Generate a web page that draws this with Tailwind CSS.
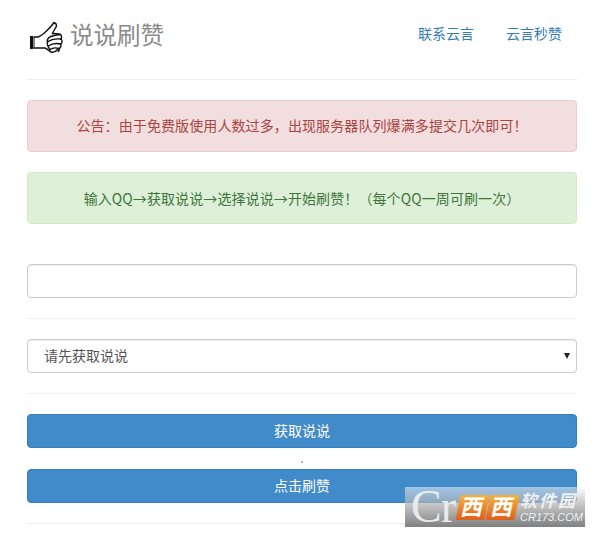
<!DOCTYPE html>
<html lang="zh-CN">
<head>
  <meta charset="UTF-8">
  <meta name="viewport" content="width=device-width, initial-scale=1.0">
  <title>说说刷赞</title>
  <script src="https://cdn.jsdelivr.net/npm/@tailwindcss/browser@4"></script>
</head>
<body class="bg-white font-['Liberation_Sans','Noto_Sans_CJK_SC',sans-serif] text-sm text-[#555]">
  <div class="relative h-[537px] w-[605px] overflow-hidden pl-[27px] pr-[28px]">
    <!-- Header -->
    <div class="flex h-[80px] items-center justify-between border-b border-[#eee]">
      <div class="-ml-[2px] flex items-center gap-[3px] pb-[8px]">
        <svg class="mt-[3px] h-[38px] w-[42px]" viewBox="0 0 42 38" fill="none" stroke="#111" stroke-width="1.4" stroke-linejoin="round" stroke-linecap="round">
          <rect x="5" y="18" width="3" height="13" fill="#111" stroke="none"/>
          <path d="M9 19 L13 19 C16 18 19 15.500 22 12.500 C25 9.500 27 7.500 29 4.500 C30.500 5 31.500 6.500 31.500 8 C30.500 10.500 28.500 13 27.500 15.500"/>
          <path d="M9 30 L20 30 C22 30.500 24 33 26 34 C28 34.500 31 33.500 33 31"/>
          <path d="M9 19.500 L9 30" stroke-width="1"/>
          <path d="M27.500 15.500 C30 15.500 33 15.500 35.500 16.500 C37 18 37 20 35.500 21"/>
          <path d="M24 19.500 C27 17.500 31 17 35.500 16.500"/>
          <path d="M22.500 24 C26 21.500 31 20.500 36 21 C37.500 22.500 37.500 25 35.500 26"/>
          <path d="M23 28 C27 25.500 31 25 35.500 26 C36.500 27.500 36 29.500 34 30.500"/>
          <path d="M25 31.500 C28 29.500 31 29.500 34 30.500 C34.500 32 34 33 33 33.500"/>
          <path d="M24 19.500 C22.500 21 22 23 22.500 24 C22 25.500 22 27 23 28 C23.500 29.500 24 30.500 25 31.500"/>
        </svg>
        <span class="text-[23.500px] leading-[34px] text-[#8a8a8a]">说说刷赞</span>
      </div>
      <nav class="flex gap-[32px] pr-[15px] pb-[12px] text-[#337ab7]">
        <a href="#">联系云言</a>
        <a href="#">云言秒赞</a>
      </nav>
    </div>

    <!-- Alerts -->
    <div class="mt-[20px] flex h-[52px] items-center justify-center rounded-[4px] border border-[#ebccd1] bg-[#f2dede] tracking-[0.1px] text-[#a94442]">公告：由于免费版使用人数过多，出现服务器队列爆满多提交几次即可！</div>
    <div class="mt-[20px] flex h-[52px] items-center justify-center rounded-[4px] border border-[#d6e9c6] bg-[#dff0d8] font-['Noto_Sans_CJK_SC',sans-serif] tracking-[0.1px] text-[#3c763d]">输入QQ→获取说说→选择说说→开始刷赞！（每个QQ一周可刷一次）</div>

    <!-- Form -->
    <input type="text" class="mt-[40px] block h-[34px] w-full rounded-[4px] border border-[#ccc] bg-white px-3 shadow-[inset_0_1px_1px_rgba(0,0,0,0.075)]">
    <div class="mt-[20px] border-t border-[#eee]"></div>
    <div class="relative mt-[20px] flex h-[34px] items-center rounded-[4px] border border-[#ccc] pl-[16px] shadow-[inset_0_1px_1px_rgba(0,0,0,0.075)]">
      请先获取说说
      <span class="absolute right-[6px] top-[13px] h-0 w-0 border-x-[3.500px] border-t-[6px] border-x-transparent border-t-[#222]"></span>
    </div>
    <div class="mt-[20px] border-t border-[#eee]"></div>
    <button class="mt-[20px] block h-[34px] w-full rounded-[4px] border border-[#357ebd] bg-[#428bca] text-white">获取说说</button>
    <span class="absolute left-[301px] top-[461px] h-[2px] w-[2px] rounded-full bg-[#9aa7b5]"></span>
    <button class="mt-[21px] block h-[34px] w-full rounded-[4px] border border-[#357ebd] bg-[#428bca] text-white">点击刷赞</button>
    <div class="mt-[20px] border-t border-[#eee]"></div>

    <!-- Watermark -->
    <div class="absolute left-[405px] top-[487px] flex h-[40px] w-[180px] items-center bg-gradient-to-b from-white/50 to-[#808080] pl-[6px]">
      <span class="w-[47px] font-['Liberation_Serif',serif] text-[46px] leading-[40px] tracking-[-1px] text-[#e8ebee]">Cr</span>
      <div class="flex gap-[1px]">
        <span class="flex h-[25px] w-[29px] -skew-x-12 items-center justify-center rounded-[2px] bg-gradient-to-b from-[#f3b33c] to-[#df5e1c] text-[22px] leading-[25px] font-bold text-white">西</span>
        <span class="flex h-[25px] w-[29px] -skew-x-12 items-center justify-center rounded-[2px] bg-gradient-to-b from-[#f3b33c] to-[#df5e1c] text-[22px] leading-[25px] font-bold text-white">西</span>
      </div>
      <div class="ml-[3px] flex flex-col items-start gap-[2px] text-[#eef1f3]">
        <span class="text-[17px] leading-[17px] font-bold tracking-[2px] italic">软件园</span>
        <span class="text-[11px] leading-[10px] italic">CR173.COM</span>
      </div>
    </div>
  </div>
</body>
</html>
